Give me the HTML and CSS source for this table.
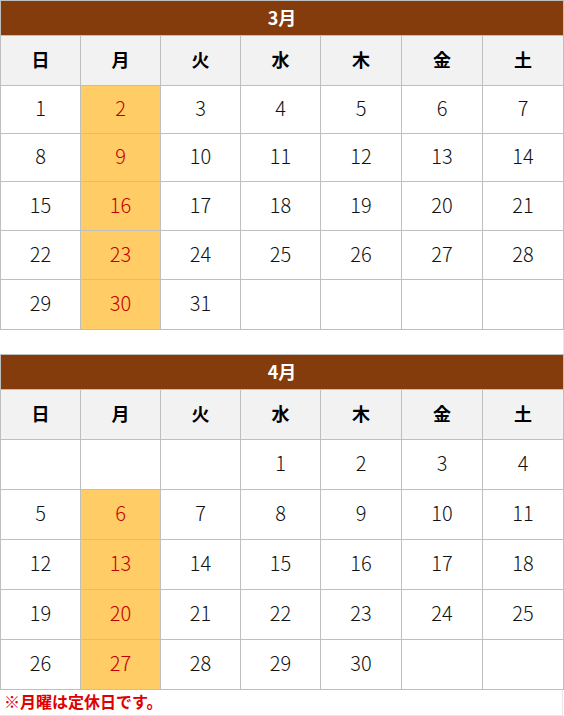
FILE: index.html
```html
<!DOCTYPE html>
<html lang="ja">
<head>
<meta charset="utf-8">
<link rel="stylesheet" href="styles.css">
</head>
<body>
<div class="page">
  <div class="cal cal-mar">
    <div class="title">3月</div>
    <div class="dow">日</div><div class="dow">月</div><div class="dow">火</div><div class="dow">水</div><div class="dow">木</div><div class="dow">金</div><div class="dow">土</div>
    <div class="d">1</div><div class="d off">2</div><div class="d">3</div><div class="d">4</div><div class="d">5</div><div class="d">6</div><div class="d">7</div>
    <div class="d">8</div><div class="d off">9</div><div class="d">10</div><div class="d">11</div><div class="d">12</div><div class="d">13</div><div class="d">14</div>
    <div class="d">15</div><div class="d off">16</div><div class="d">17</div><div class="d">18</div><div class="d">19</div><div class="d">20</div><div class="d">21</div>
    <div class="d">22</div><div class="d off">23</div><div class="d">24</div><div class="d">25</div><div class="d">26</div><div class="d">27</div><div class="d">28</div>
    <div class="d">29</div><div class="d off">30</div><div class="d">31</div><div class="d"></div><div class="d"></div><div class="d"></div><div class="d"></div>
  </div>
  <div class="spacer"></div>
  <div class="cal cal-apr">
    <div class="title">4月</div>
    <div class="dow">日</div><div class="dow">月</div><div class="dow">火</div><div class="dow">水</div><div class="dow">木</div><div class="dow">金</div><div class="dow">土</div>
    <div class="d"></div><div class="d"></div><div class="d"></div><div class="d">1</div><div class="d">2</div><div class="d">3</div><div class="d">4</div>
    <div class="d">5</div><div class="d off">6</div><div class="d">7</div><div class="d">8</div><div class="d">9</div><div class="d">10</div><div class="d">11</div>
    <div class="d">12</div><div class="d off">13</div><div class="d">14</div><div class="d">15</div><div class="d">16</div><div class="d">17</div><div class="d">18</div>
    <div class="d">19</div><div class="d off">20</div><div class="d">21</div><div class="d">22</div><div class="d">23</div><div class="d">24</div><div class="d">25</div>
    <div class="d">26</div><div class="d off">27</div><div class="d">28</div><div class="d">29</div><div class="d">30</div><div class="d"></div><div class="d"></div>
  </div>
  <div class="note">※月曜は定休日です。</div>
</div>
</body>
</html>
```
FILE: styles.css
```css
html, body {
  margin: 0;
  padding: 0;
  background: #ffffff;
}
body {
  font-family: "Noto Sans CJK JP", "Noto Sans", sans-serif;
}
.page {
  width: 564px;
  display: flex;
  flex-direction: column;
}
.cal {
  display: grid;
  grid-template-columns: 79px 79px 79px 79px 80px 80px 80px;
  gap: 1px;
  padding: 1px;
  background: #bfbfbf;
}
.cal-mar {
  grid-template-rows: 34px 49px 47px 47px 48px 48px 49px;
}
.cal-apr {
  grid-template-rows: 34px 49px 49px 49px 49px 49px 49px;
}
.title {
  grid-column: 1 / -1;
  background: #843c0c;
  color: #ffffff;
  font-weight: 700;
  font-size: 18px;
  display: flex;
  align-items: center;
  justify-content: center;
  padding-bottom: 2px;
}
.dow {
  background: #f2f2f2;
  color: #000000;
  font-weight: 700;
  font-size: 18px;
  display: flex;
  align-items: center;
  justify-content: center;
  padding-bottom: 3px;
}
.d {
  background: #ffffff;
  color: #111111;
  font-weight: 300;
  font-size: 20px;
  display: flex;
  align-items: center;
  justify-content: center;
  padding-bottom: 4px;
}
.d.off {
  background: #ffcc66;
  color: #c00000;
}
.spacer {
  height: 24px;
  border-right: 1px solid #e6e6e6;
  width: 563px;
}
.note {
  width: 563px;
  height: 26px;
  border-right: 1px solid #e6e6e6;
  border-bottom: 1px solid #e6e6e6;
  color: #e00000;
  font-weight: 700;
  font-size: 16px;
  line-height: 22px;
  padding-left: 4px;
  box-sizing: border-box;
}
```
